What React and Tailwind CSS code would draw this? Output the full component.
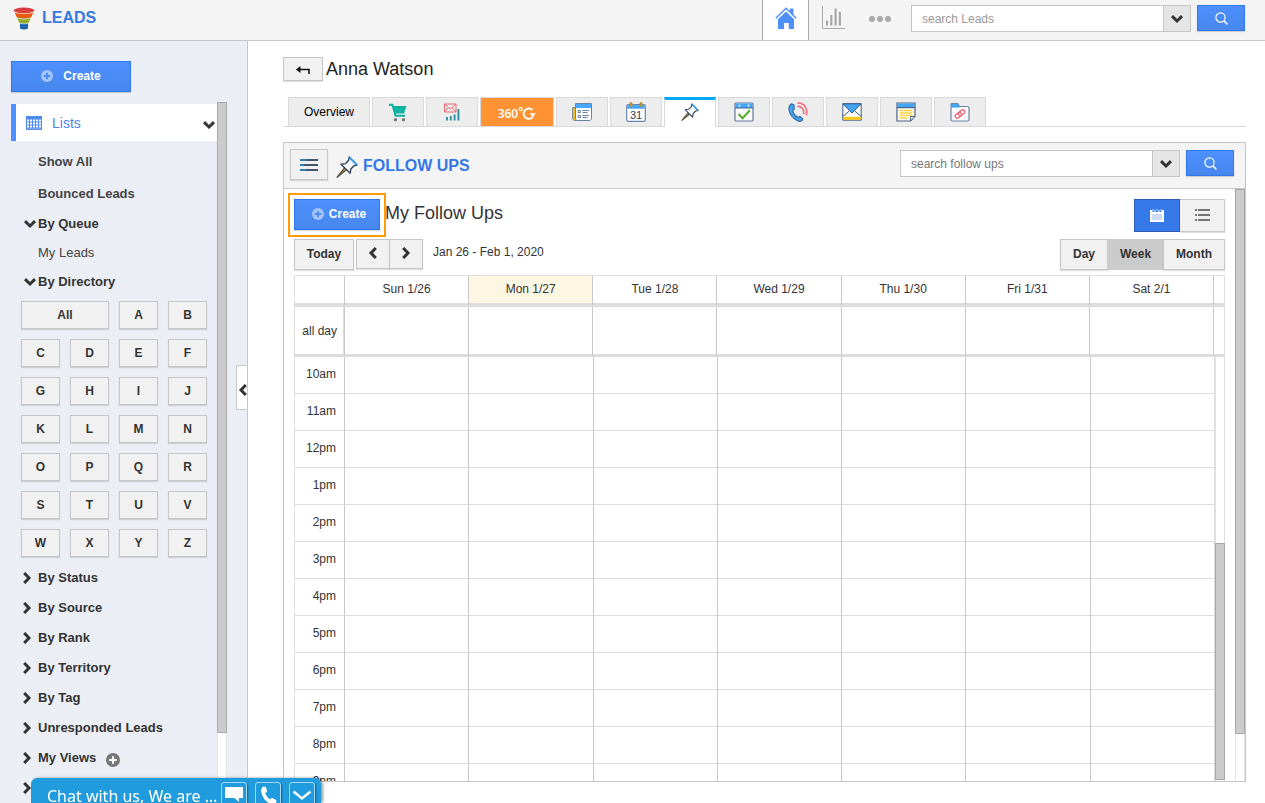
import React, { useState } from 'react';
import clsx from 'clsx';

const letters = 'ABCDEFGHIJKLMNOPQRSTUVWXYZ'.split('');
const groups = ['By Status', 'By Source', 'By Rank', 'By Territory', 'By Tag', 'Unresponded Leads'];
const days = ['Sun 1/26', 'Mon 1/27', 'Tue 1/28', 'Wed 1/29', 'Thu 1/30', 'Fri 1/31', 'Sat 2/1'];
const hours = ['10am', '11am', '12pm', '1pm', '2pm', '3pm', '4pm', '5pm', '6pm', '7pm', '8pm', '9pm'];

const blueButton = 'border border-[#3079ed] bg-linear-to-b from-[#4d90fe] to-[#4787ed] text-white shadow-[0_1px_1px_rgba(0,0,0,0.15)]';
const grayButton = 'border border-[#c6c6c6] bg-[#f1f1f1] text-[#333] shadow-[0_1px_1px_rgba(0,0,0,0.12)]';

const rotations = { down: '', right: '-rotate-90', left: 'rotate-90' };

const Chevron = ({ dir = 'down' }) => (
  <svg className={clsx('shrink-0', rotations[dir])} width="12" height="12" viewBox="0 0 12 12" fill="none">
    <path d="M1 3.2 6 8l5-4.8" stroke="#333" strokeWidth="3" />
  </svg>
);

const Plus = ({ size = 12, fill, cross }) => (
  <svg width={size} height={size} viewBox="0 0 12 12">
    <circle cx="6" cy="6" r="6" fill={fill} />
    <path d="M6 2.8v6.4M2.8 6h6.4" stroke={cross} strokeWidth="1.8" />
  </svg>
);

const FunnelIcon = () => (
  <svg width="22" height="24" viewBox="0 0 22 24">
    <path d="M7 16h8v5.5q-4 2-8 0z" fill="#1b66b1" />
    <path d="M4 11h14l-2.5 5q-4.5 1.6-9 0z" fill="#8fae2e" />
    <path d="M1.5 5.5h19l-2.5 5q-7 2-14 0z" fill="#e65a12" />
    <ellipse cx="11" cy="3.5" rx="10.5" ry="2.9" fill="#d8403f" />
    <path d="M.5 5q10.5 3.4 21 0M3.5 11q7.500 2.2 15 0M6 16.2q5 1.400 10 0" fill="none" stroke="#fff" strokeWidth=".6" />
  </svg>
);

const ListsIcon = () => (
  <svg width="16" height="14" viewBox="0 0 16 14">
    <path d="M0 0h16v14H0z" fill="#4d8af0" />
    <path d="M1 4.5h14M1 7.5h14M1 10.5h14" stroke="#fff" strokeWidth="2" strokeDasharray="2 1" />
    <path d="M1 12.7h14" stroke="#a9c8fb" strokeWidth=".6" />
  </svg>
);

const HomeIcon = () => (
  <svg width="22" height="22" viewBox="0 0 22 22">
    <path d="M15 1.5h3.400v7L15 5.500z" fill="#4d90fe" />
    <path d="M3 12.300 11 4.600l8 7.700V22h-5.200v-6H9v6H3z" fill="#4d90fe" />
    <path d="M.8 12.600 11 2.700l10.200 9.900" fill="none" stroke="#fff" strokeWidth="1.400" />
    <path d="M.8 11.200 11 1.300l10.200 9.900" fill="none" stroke="#4d90fe" strokeWidth="1.500" />
  </svg>
);

const ChartIcon = () => (
  <svg width="24" height="24" viewBox="0 0 24 24" fill="none" stroke="#aaa">
    <path d="M1.5 0v22.500H24" />
    <path d="M6 19.500v-5M10.300 19.500V9M14.600 19.500V2.500M18.900 19.500V6" stroke="#a6a6a6" strokeWidth="2.100" />
  </svg>
);

const SearchIcon = () => (
  <svg width="13" height="13" viewBox="0 0 13 13" fill="none" stroke="#fff" strokeWidth="1.200">
    <circle cx="5.500" cy="5.500" r="4.600" />
    <path d="m8.800 8.800 3.600 3.600" strokeWidth="1.500" />
  </svg>
);

const PinIcon = ({ size }) => (
  <svg width={size} height={size} viewBox="0 0 22 22" strokeLinejoin="round">
    <path d="m8.800 11.800 1.800 1.700L1.200 21.300z" fill="#e8c04a" stroke="#5c5640" strokeWidth="1.400" />
    <path d="m13.200 1 7.800 8-3 .8-3.200 3.300-.6 4.100L5 8.200l4.600-.6 3-3.200z" fill="#fff" stroke="#34465f" strokeWidth="1.400" />
    <path d="m13.500 1.500 7 7.200" fill="none" stroke="#36a3f0" strokeWidth="1.800" />
  </svg>
);

const CartIcon = () => (
  <svg width="20" height="20" viewBox="0 0 20 20">
    <path d="M1 2.800h3.400l3.200 11h9.600" fill="none" stroke="#0bb3a0" strokeWidth="2" />
    <path d="M5 4h13.500l-2.500 7.600H7.200z" fill="#0bb3a0" />
    <circle cx="7.500" cy="17.700" r="1.700" fill="#777" />
    <circle cx="15.500" cy="17.700" r="1.700" fill="#777" />
  </svg>
);

const CampaignIcon = () => (
  <svg width="18" height="20" viewBox="0 0 18 20" fill="none">
    <path d="M1.500 2H13v8H1.500zM1.500 2l5.700 5L13 2M1.500 10l4-4.500M13 10 9 5.500" stroke="#ee6a70" />
    <path d="M4 18.500V15M7.800 18.500v-4.500M11.600 18.500v-6M15.400 18.500V7" stroke="#2e92a5" strokeWidth="1.900" />
  </svg>
);

const ThreeSixty = () => (
  <span className="flex items-center pt-1 font-['Open_Sans',sans-serif] text-xs font-semibold text-white">
    360
    <span className="self-start text-xs leading-3">°</span>
    <svg className="-ml-0.5" width="15" height="14" viewBox="0 0 15 14" fill="none" stroke="#fff" strokeWidth="1.800">
      <path d="M11.500 3A5.200 5.200 0 1 0 11.700 10.200" />
      <path d="M8.800 6.300h6l-3 4.200z" fill="#fff" stroke="none" />
    </svg>
  </span>
);

const NewsIcon = () => (
  <svg width="20" height="18" viewBox="0 0 20 18" stroke="#6a83ab">
    <path d="M3.500 4.500H.7V16l1.500 1.400H5" fill="#f6c417" />
    <path d="M3.500.5h16v15.500l-1.500 1.500H5L3.500 16z" fill="#fff" />
    <path d="M4 1h15v4H4z" fill="#4aa8ff" stroke="none" />
    <path d="M6 7.500h2.500v2H6zM6 12.500h2.500v2H6zM10.500 7.500H17M10.500 9.500h5M10.500 12.500H17M10.500 14.500h5" fill="none" />
  </svg>
);

const CalendarIcon = () => (
  <svg width="20" height="20" viewBox="0 0 20 20">
    <rect x=".7" y="2.500" width="18.600" height="16.800" rx="1.500" fill="#fff" stroke="#6a83ab" strokeWidth="1.200" />
    <path d="M1.300 3.100h17.400v3.600H1.300z" fill="#42a5f5" />
    <path d="M5 1.600v2M15 1.600v2" stroke="#b39438" strokeWidth="3" strokeLinecap="round" />
    <text x="10" y="17" textAnchor="middle" fontSize="11" fill="#2f4468" fontFamily="Liberation Sans, sans-serif">31</text>
  </svg>
);

const TaskIcon = () => (
  <svg width="20" height="20" viewBox="0 0 20 20">
    <rect x="1" y="1" width="18" height="18" rx="1" fill="#fff" stroke="#5f7698" strokeWidth="1.200" />
    <path d="M1.500 1.500h17V6h-17z" fill="#42a5f5" />
    <path d="M1 6h18" stroke="#4a6590" />
    <path d="M5.500 2.800v1.600M14.500 2.800v1.600" stroke="#fff" strokeWidth="1.600" />
    <path d="m4.500 12 4 4.200 7.500-8" fill="none" stroke="#5bb030" strokeWidth="2.200" />
  </svg>
);

const PhoneIcon = () => (
  <svg width="20" height="20" viewBox="0 0 20 20" fill="none">
    <path d="M3.600 1.800 6 3.200l.2 4L4.600 8.600q.8 4 5.400 6.800l2-1 2.700 2.200-.5 1.800Q12.500 20 9.500 18.700 2 15 1 7.500.7 3.300 3.600 1.800z" fill="#42a5f5" stroke="#3a6698" strokeWidth="1.200" />
    <path d="M9.500 1Q18 1 18.800 9.500q0 2-.8 3.800M9.500 4.200q6 .4 6.300 6.300 0 1-.3 1.800" stroke="#f06a7a" strokeWidth="1.500" />
  </svg>
);

const MailIcon = () => (
  <svg width="20" height="18" viewBox="0 0 20 18" stroke="#3d5a85" strokeLinejoin="round">
    <path d="M.8.8h18.400v16.400H.8z" fill="#fff" />
    <path d="M1.200 13.800h17.600v3H1.200z" fill="#fbc516" stroke="none" />
    <path d="m1 13.300 6.500-5.500M19 13.300 12.500 7.800" />
    <path d="M.8.8h18.400L10 10z" fill="#42a5f5" />
  </svg>
);

const NoteIcon = () => (
  <svg width="20" height="20" viewBox="0 0 20 20">
    <path d="M1 1h18v13l-4.500 5H1z" fill="#fff" stroke="#4a5f80" strokeWidth="1.200" />
    <path d="M1.500 1.500h17v4h-17z" fill="#42a5f5" />
    <path d="M1 5.700h18" stroke="#34496b" />
    <path d="M3.500 8.500h13M3.500 11h13M3.500 13.500h13M3.500 16h8" stroke="#f8cf45" strokeWidth="1.400" />
    <path d="M14.500 19v-4.500H19z" fill="#fff" stroke="#4a5f80" />
  </svg>
);

const FolderIcon = () => (
  <svg width="20" height="20" viewBox="0 0 20 20" fill="none">
    <path d="M1 4.500V1.500h7L9.500 4.500" fill="#42a5f5" stroke="#6a83ab" />
    <rect x="1" y="4.500" width="18" height="14.500" rx="1.500" fill="#fff" stroke="#6a83ab" strokeWidth="1.200" />
    <path d="M1 4.600h8.500" stroke="#42a5f5" strokeWidth="2" />
    <g stroke="#f06277" strokeWidth="1.300" transform="rotate(-38 10 12)">
      <rect x="4.500" y="10" width="7" height="4" rx="2" />
      <rect x="8.500" y="10" width="7" height="4" rx="2" />
    </g>
  </svg>
);

const tabs = [
  { name: 'Store', icon: <CartIcon /> },
  { name: 'Campaigns', icon: <CampaignIcon /> },
  { name: '360', icon: <ThreeSixty />, orange: true },
  { name: 'News', icon: <NewsIcon /> },
  { name: 'Calendar', icon: <CalendarIcon /> },
  { name: 'Follow Ups', icon: <PinIcon size={18} /> },
  { name: 'Tasks', icon: <TaskIcon /> },
  { name: 'Calls', icon: <PhoneIcon /> },
  { name: 'Emails', icon: <MailIcon /> },
  { name: 'Notes', icon: <NoteIcon /> },
  { name: 'Documents', icon: <FolderIcon /> }
];

const SearchBox = ({ placeholder, dim }) => (
  <form className="flex items-start gap-1.5" onSubmit={e => e.preventDefault()}>
    <div className="flex h-[27px] w-[280px] border border-[#c6c6c6] bg-white">
      <input
        type="text"
        aria-label={placeholder}
        placeholder={placeholder}
        className={clsx('min-w-0 flex-1 px-2.5 text-xs outline-none', dim ? 'placeholder:text-[#999]' : 'placeholder:text-[#777]')}
      />
      <button type="button" aria-label="Search options" className="flex w-[27px] items-center justify-center border-l border-[#c6c6c6] bg-[#e5e5e5]">
        <Chevron />
      </button>
    </div>
    <button type="submit" aria-label="Search" className={clsx('flex h-[26px] w-12 items-center justify-center', blueButton)}>
      <SearchIcon />
    </button>
  </form>
);

const Header = () => (
  <header className="flex h-[41px] shrink-0 border-b border-[#c6c6c6] bg-[#f4f4f4] pr-5">
    <a href="#leads" className="flex items-start gap-[7px] pt-[7px] pl-[13px] text-base leading-[22px] font-bold text-[#3578e5]">
      <FunnelIcon />
      LEADS
    </a>
    <nav className="ml-auto flex">
      <a href="#home" aria-label="Home" className="flex w-[47px] justify-center border-x border-[#aaa] bg-white pt-[7px]">
        <HomeIcon />
      </a>
      <a href="#reports" aria-label="Reports" className="flex w-12 justify-center pt-[6px]">
        <ChartIcon />
      </a>
      <a href="#more" aria-label="More" className="flex w-[46px] justify-center pt-4">
        <svg width="22" height="6" viewBox="0 0 22 6" fill="#aaa">
          <circle cx="3" cy="3" r="3" />
          <circle cx="11" cy="3" r="3" />
          <circle cx="19" cy="3" r="3" />
        </svg>
      </a>
    </nav>
    <div className="pt-[5px] pl-2">
      <SearchBox placeholder="search Leads" dim />
    </div>
  </header>
);

const Group = ({ label, open, children }) => (
  <div className="flex h-[30px] items-center pl-[10px]">
    <button aria-label={label ? undefined : 'More lists'} className={clsx('flex items-center font-bold', open ? 'gap-0.5 pl-[3px]' : 'gap-[5px]')}>
      <Chevron dir={open ? 'down' : 'right'} />
      {label}
    </button>
    {children}
  </div>
);

const Sidebar = () => (
  <aside className="relative flex w-[248px] shrink-0 flex-col border-r border-[#c6c6c6] bg-[#ebeff5] pt-5 pr-5 pl-[11px] text-[13px] text-[#333]">
    <button className={clsx('flex h-[31px] w-[120px] items-center justify-center gap-2.5 pb-0.5 text-xs font-bold', blueButton)}>
      <Plus fill="#a6c5fa" cross="#4a8af5" />
      Create
    </button>
    <div className="mt-[10px] flex min-h-0 flex-1">
      <div className="min-w-0 flex-1 overflow-hidden pt-[2px]">
        <button className="flex h-[37px] w-full items-center border-l-[5px] border-[#4d90fe] bg-white pl-[10px] text-sm text-[#4d86e8]">
          <ListsIcon />
          <span className="ml-[10px]">Lists</span>
          <span className="mt-1 ml-auto pr-[2px]">
            <Chevron />
          </span>
        </button>
        <ul className="pt-[5px] pl-[27px] leading-8 font-bold text-[#444]">
          <li>
            <a href="#all">Show All</a>
          </li>
          <li>
            <a href="#bounced">Bounced Leads</a>
          </li>
        </ul>
        <div className="-mt-px">
          <Group label="By Queue" open />
        </div>
        <a href="#mine" className="block pl-[27px] leading-7 text-[#444]">
          My Leads
        </a>
        <Group label="By Directory" open />
        <div className="grid grid-cols-4 gap-[10px] px-[10px] pt-1 pb-[6px]">
          <button className={clsx('col-span-2 h-7 text-xs font-bold', grayButton)}>All</button>
          {letters.map(l => (
            <button key={l} className={clsx('h-7 text-xs font-bold', grayButton)}>
              {l}
            </button>
          ))}
        </div>
        {groups.map(g => (
          <Group key={g} label={g} />
        ))}
        <Group label="My Views">
          <button aria-label="Add view" className="ml-[10px] pt-1">
            <Plus size={14} fill="#777" cross="#fff" />
          </button>
        </Group>
        <Group />
      </div>
      <div className="w-[10px] border-x border-[#e4e4e4] bg-white">
        <div className="-mx-px h-[90%] border border-[#a8a8a8] bg-[#cbcbcb]" />
      </div>
    </div>
    <button aria-label="Collapse sidebar" className="absolute top-[324px] -right-px flex h-[45px] w-3 items-center border border-[#c6c6c6] bg-white pt-1">
      <Chevron dir="left" />
    </button>
  </aside>
);

const Tabs = ({ active, onChange }) => (
  <div className="mt-4 flex h-[30px] gap-0.5 border-b border-[#d9d9d9] pl-[5px]">
    <button className="w-[82px] border border-b-0 border-[#d9d9d9] bg-[#ededed] text-xs text-black">Overview</button>
    {tabs.map(t => (
      <button
        key={t.name}
        aria-label={t.name}
        onClick={() => onChange(t.name)}
        className={clsx(
          'flex items-center justify-center border border-b-0 border-[#d9d9d9]',
          t.orange ? 'w-[74px] bg-[#ff9333]' : 'w-[52px]',
          active === t.name ? '-mb-px border-t-[3px] border-t-[#03a9f4] bg-white pb-1' : !t.orange && 'bg-[#ededed]'
        )}
      >
        {t.icon}
      </button>
    ))}
  </div>
);

const Toolbar = () => (
  <>
    <div className="flex justify-between pt-1">
      <div className="-ml-[6px] flex">
        <div className="border-2 border-[#ff9c07] p-1 pb-[5px]">
          <button className={clsx('flex h-[31px] w-[86px] items-center justify-center gap-[5px] pb-0.5 pl-1 text-xs font-bold', blueButton)}>
            <Plus fill="#a6c5fa" cross="#4a8af5" />
            Create
          </button>
        </div>
        <h2 className="-ml-px pt-2 text-lg leading-6 text-[#333]">My Follow Ups</h2>
      </div>
      <div className="flex h-[33px] self-center">
        <button aria-label="Calendar view" className="flex w-[46px] items-center justify-center border border-[#2f5bb7] bg-[#357ae8]">
          <svg width="14" height="13" viewBox="0 0 14 13">
            <path d="M0 1h2.500v2h2V1h1v2h3V1h1v2h2V1H14v12H0z" fill="#fff" />
            <path d="M3 0v2M7 0v2M11 0v2" stroke="#b9d2fa" />
            <path d="M2 5h10v6H2z" fill="#cbdcfb" />
          </svg>
        </button>
        <button aria-label="List view" className={clsx('flex w-[45px] items-center justify-center border-l-0', grayButton)}>
          <svg width="15" height="12" viewBox="0 0 15 12" stroke="#777" strokeWidth="2">
            <path d="M0 1h2M3 1h12M0 6h2M3 6h12M0 11h2M3 11h12" />
          </svg>
        </button>
      </div>
    </div>
    <div className="mt-0.5 flex h-[31px] text-xs text-[#333]">
      <button className={clsx('w-[60px] pb-0.5 font-bold', grayButton)}>Today</button>
      <div className="ml-0.5 flex h-[30px]">
        <button aria-label="Previous week" className={clsx('flex w-[34px] items-center justify-center pb-0.5', grayButton)}>
          <Chevron dir="left" />
        </button>
        <button aria-label="Next week" className={clsx('-ml-px flex w-[34px] items-center justify-center pb-0.5', grayButton)}>
          <Chevron dir="right" />
        </button>
      </div>
      <span className="ml-[10px] leading-[26px]">Jan 26 - Feb 1, 2020</span>
      <div className="ml-auto flex font-bold">
        <button className={clsx('w-12 pb-0.5', grayButton)}>Day</button>
        <button className="-mx-px w-[57px] border border-[#cbcbcb] bg-[#cbcbcb] pb-0.5">Week</button>
        <button className={clsx('w-[62px] pb-0.5', grayButton)}>Month</button>
      </div>
    </div>
  </>
);

const WeekView = () => (
  <div className="mt-[5px] flex min-h-0 flex-1 flex-col overflow-hidden text-xs text-[#333]">
    <table className="w-full shrink-0 table-fixed border-separate border-spacing-0 border-r border-[#ddd]">
      <thead>
        <tr className="h-8">
          <td className="w-[50px] border-t border-b-4 border-l border-[#ddd]" />
          {days.map((d, i) => (
            <th key={d} className={clsx('border-t border-b-4 border-l border-[#ddd] border-l-[#c8c8c8] pb-0.5 font-normal', i === 1 && 'bg-[#fdf6e3]')}>
              {d}
            </th>
          ))}
          <td className="w-[11px] border-t border-b-4 border-l border-[#ddd] border-l-[#c8c8c8]" />
        </tr>
      </thead>
      <tbody>
        <tr className="h-[50px]">
          <th className="border-r border-b-[3px] border-l border-[#ddd] pr-[6px] text-right font-normal">all day</th>
          {days.map(d => (
            <td key={d} className="border-b-[3px] border-l border-[#ddd] border-l-[#c8c8c8]" />
          ))}
          <td className="border-b-[3px] border-l border-[#ddd] border-l-[#c8c8c8]" />
        </tr>
      </tbody>
    </table>
    <div className="flex min-h-0 flex-1">
      <div className="min-w-0 flex-1 overflow-hidden border-r border-[#ddd]">
        <table className="w-full table-fixed border-separate border-spacing-0">
          <tbody>
            {hours.map(h => (
              <tr key={h} className="h-[37px]">
                <th className="w-[50px] border-b border-l border-[#ddd] pr-2 pb-0.5 text-right font-normal">{h}</th>
                {days.map(d => (
                  <td key={d} className="border-b border-l border-[#ddd] border-l-[#c8c8c8]" />
                ))}
              </tr>
            ))}
          </tbody>
        </table>
      </div>
      <div className="flex w-[10px] flex-col justify-end border-x border-[#e0e0e0] bg-white pb-px">
        <div className="-mx-px h-[56%] border border-[#a8a8a8] bg-[#cbcbcb]" />
      </div>
    </div>
  </div>
);

const FollowUps = () => (
  <section className="mt-[15px] flex min-h-0 flex-1 flex-col border border-[#c6c6c6]">
    <div className="flex h-[46px] shrink-0 items-start border-b border-[#c6c6c6] bg-[#f4f4f4] pr-[11px] pl-[6px]">
      <button aria-label="Menu" className={clsx('mt-[6px] flex h-[31px] w-[38px] items-center justify-center', grayButton)}>
        <svg width="18" height="12" viewBox="0 0 18 12" strokeWidth="2">
          <path d="M0 1h18M0 6h18M0 11h18" stroke="#44546a" />
          <path d="M0 1h6M0 6h4M0 11h6" stroke="#2d7fb8" />
        </svg>
      </button>
      <h1 className="mt-[13px] ml-2 flex items-start gap-[5px] text-base leading-5 font-bold text-[#3578e5]">
        <PinIcon size={22} />
        FOLLOW UPS
      </h1>
      <div className="ml-auto pt-[7px]">
        <SearchBox placeholder="search follow ups" />
      </div>
    </div>
    <div className="flex min-h-0 flex-1">
      <div className="flex min-w-0 flex-1 flex-col px-[10px]">
        <Toolbar />
        <WeekView />
      </div>
      <div className="w-[10px] border-x border-[#e4e4e4] bg-white">
        <div className="-mx-px h-[92%] border border-[#a8a8a8] bg-[#cbcbcb]" />
      </div>
    </div>
  </section>
);

const ChatButton = ({ label, children }) => (
  <button aria-label={label} className="h-[26px] w-[26px] shrink-0 rounded-[3px] border border-white/60 p-0.5 shadow-[1px_1px_2px_rgba(0,0,0,0.4)]">
    <svg width="20" height="20" viewBox="0 0 20 20">
      {children}
    </svg>
  </button>
);

const ChatBar = () => (
  <div className="fixed bottom-0 left-[31px] flex h-[25px] w-[290px] gap-2 rounded-t-md bg-[#209cde] pt-1 pr-[7px] pl-4 text-white shadow-[2px_0_3px_rgba(0,0,0,0.4)]">
    <span className="-mr-1 flex-1 font-['Noto_Sans',sans-serif] text-base leading-7 whitespace-nowrap">Chat with us, We are …</span>
    <ChatButton label="Chat">
      <path d="M1 2h18v11h-4v4l-4.500-4H1z" fill="#fff" />
    </ChatButton>
    <ChatButton label="Call">
      <path d="M5 1.500 7.800 2l1.400 4.500-2 1.800q1.500 4 4.800 6l2-1.500 4.500 2.500-.5 3q-2 1.500-5.500.5Q4.500 15.500 3 6q0-3 2-4.500z" fill="#fff" />
    </ChatButton>
    <ChatButton label="Minimize">
      <path d="m1.500 6.500 8.500 7 8.500-7" fill="none" stroke="#fff" strokeWidth="2.400" />
    </ChatButton>
  </div>
);

const App = () => {
  const [tab, setTab] = useState('Follow Ups');

  return (
    <div className="flex h-screen flex-col overflow-hidden bg-white font-['Liberation_Sans',Arial,sans-serif]">
      <Header />
      <div className="flex min-h-0 flex-1">
        <Sidebar />
        <main className="flex min-w-0 flex-1 flex-col pt-4 pr-[19px] pb-[21px] pl-[35px]">
          <div className="flex h-6 items-center gap-[3px]">
            <button aria-label="Back" className={clsx('flex h-6 w-10 items-center justify-center', grayButton)}>
              <svg width="14" height="9" viewBox="0 0 14 9">
                <path d="M0 4.500 4.500 1v7z" fill="#111" />
                <path d="M3 4.500h10V9" fill="none" stroke="#111" strokeWidth="1.600" />
              </svg>
            </button>
            <span className="text-lg leading-6 text-[#222]">Anna Watson</span>
          </div>
          <Tabs active={tab} onChange={setTab} />
          <FollowUps />
        </main>
      </div>
      <ChatBar />
    </div>
  );
};

export default App;
